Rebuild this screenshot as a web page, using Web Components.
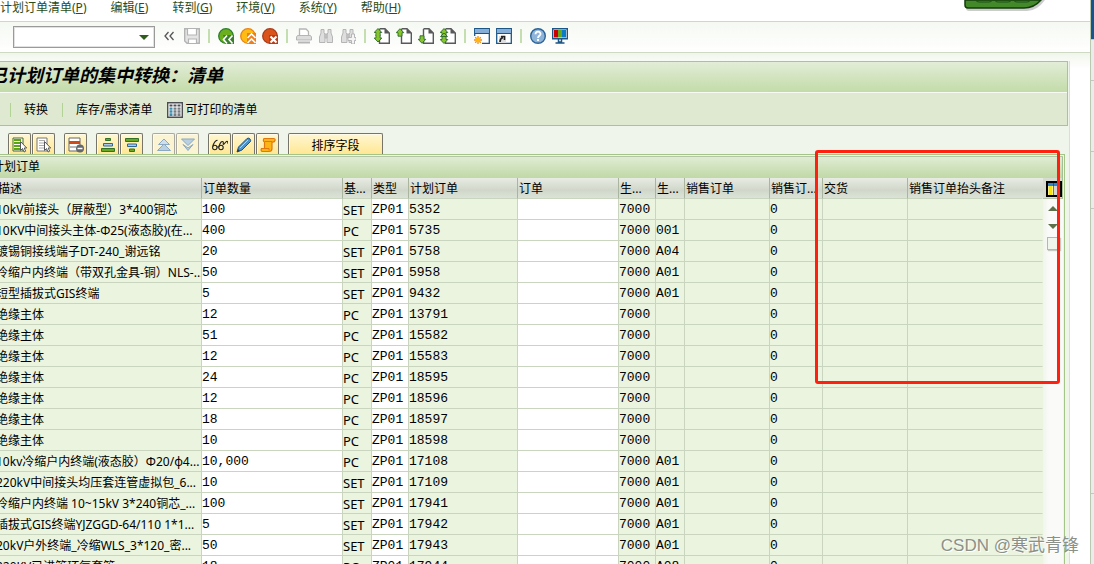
<!DOCTYPE html>
<html lang="zh-CN">
<head>
<meta charset="utf-8">
<title>已计划订单的集中转换：清单</title>
<style>
html,body{margin:0;height:100%;overflow:hidden;background:#fff}
body{font:12px/16px "Noto Sans","Noto Sans CJK SC",sans-serif;color:#000}
</style>
</head>
<body>
<sap-window>
  <menu-bar slot="menu"></menu-bar>
  <system-toolbar slot="system"></system-toolbar>
  <title-panel slot="title"><span>已计划订单的集中转换：清单</span></title-panel>
  <alv-toolbar slot="tools"></alv-toolbar>
  <alv-grid slot="grid" caption="计划订单"></alv-grid>
</sap-window>
<float-tab></float-tab>
<callout-box></callout-box>
<water-mark>CSDN @寒武青锋</water-mark>
<script>
const define=(name,html,setup)=>customElements.define(name,class extends HTMLElement{
  constructor(){super();this.attachShadow({mode:'open'});}
  connectedCallback(){
    const t=document.createElement('template');
    t.innerHTML=html;
    this.shadowRoot.append(t.content.cloneNode(true));
    if(setup)setup(this,this.shadowRoot);
  }
});

const page='<path d="M5.500 .7H11l4.300 4.300v10.300H5.500V1" fill="#fff" stroke="#58595b" stroke-width="1.400"/><path d="M10.500 .5V5.500H15.500z" fill="#58595b"/>';
const up=(y)=>`<path d="M4 ${y}l3.800 4H6v3.500H2v-3.500H.2z" fill="#86c52c" stroke="#2c6a2e" stroke-width=".9"/>`;
const down=(y)=>`<path d="M4 ${y}l3.800-4H6v-3.500H2v3.500H.2z" fill="#86c52c" stroke="#2c6a2e" stroke-width=".9"/>`;
const cursor='<path d="M8.500 4.500v9l2-2 1.500 3.500 1.700-.8-1.500-3.200h2.500z" fill="#fff" stroke="#55585c"/>';
const binoc='<path d="M3 1.500h3v3l1 2v8H1.500V9L3 5zM10 1.500h3V5l1.500 4v5.500H9v-8l1-2zM7 6h2v4H7z" fill="#dedede" stroke="#b5b5b5"/>';
const icons={
 more:'<path d="M7.500 4 4 8l3.500 4M12.500 4 9 8l3.500 4" fill="none" stroke="#555" stroke-width="1.300"/>',
 save:'<path d="M.7.700h14.600v14.600H3L.7 13z" fill="#e4e4e4" stroke="#b3b3b3" stroke-width="1.400"/><path d="M3.500 1v6h9V1M4.500 15v-4h8v4" fill="#fff" stroke="#b3b3b3" stroke-width="1.200"/>',
 back:'<circle cx="8" cy="8" r="7.300" fill="#6bae1e" stroke="#2d7d2e" stroke-width="1.300"/><path d="M5 7h11v9H8z" fill="#3a7f2c"/><path d="M9 7.500 5.500 11.500 9 15.500M14.500 7.500 11 11.500l3.500 4" fill="none" stroke="#fff" stroke-width="1.600"/>',
 exit:'<circle cx="8" cy="8" r="7.300" fill="#fdbb13" stroke="#e88314" stroke-width="1.300"/><path d="M7 5h9v11H7z" fill="#ef7d1a"/><path d="M7.500 10l4-4 4 4M7.500 15l4-4 4 4" fill="none" stroke="#fff" stroke-width="1.600"/>',
 cancel:'<circle cx="8" cy="8" r="7.300" fill="#d9531a" stroke="#a83c1c" stroke-width="1.300"/><path d="M7 7h9v9H7z" fill="#b63d18"/><path d="M8.500 8.500l6 6m0-6-6 6" stroke="#fff" stroke-width="2.200"/>',
 print:'<path d="M3.500 8V1H10l2.500 2.500V8" fill="#fff" stroke="#b5b5b5" stroke-width="1.300"/><path d="M1.500 7.500h13l1 1.500v3H.5V9z" fill="#dcdcdc" stroke="#b5b5b5"/><path d="M2 14.500h12" stroke="#b5b5b5" stroke-width="2"/>',
 find:binoc,
 findnext:binoc+'<path d="M11.500 6v3.500H8v3h3.500V16h3v-3.500H16v-3h-1.500V6z" fill="#f4f4f4" stroke="#b5b5b5"/>',
 first:page+down(14)+up(.5)+'<path d="M2.500 5.500h3v4h-3z" fill="#86c52c"/>',
 prev:page+up(.7),
 next:page+down(15.300),
 last:page+down(15.500)+up(.5)+'<path d="M.5 8.500h7L4 5z" fill="#86c52c" stroke="#2c6a2e" stroke-width=".9"/>',
 session:'<path d="M.7.700h14.600v14.600H.7z" fill="#fff" stroke="#1c5687" stroke-width="1.300"/><path d="M1 1h14v4.500H1z" fill="#87aed6"/><path d="M1 5.500h14" stroke="#1c5687"/><path d="M0 8h8v8H0z" fill="#fff"/><path d="M4 8v8M0 12h8M1.200 9.200l5.600 5.600M6.800 9.200l-5.600 5.600" stroke="#f08b1d" stroke-width="1.300"/><circle cx="4" cy="12" r="2.400" fill="#fdb813"/>',
 shortcut:'<path d="M.7.700h14.600v14.600H.7z" fill="#fff" stroke="#1c5687" stroke-width="1.300"/><path d="M1 1h14v4.500H1z" fill="#87aed6"/><path d="M1 5.500h14" stroke="#1c5687"/><path d="M3 8h7v7H3z" fill="#ddd"/><path d="M4 14c0-3 1-4 3-4.500M5 8.500h3.500V12" fill="none" stroke="#222" stroke-width="1.600"/>',
 help:'<circle cx="8" cy="8" r="7.300" fill="#8fb4da" stroke="#2c6296" stroke-width="1.400"/><path d="M5.500 6.200c0-3.600 5.300-3.200 5 0-.2 1.600-2.500 1.800-2.500 3.800M8 11v2" fill="none" stroke="#fff" stroke-width="1.900"/>',
 monitor:'<path d="M.7.700h14.600v10H.7z" fill="#fff" stroke="#1c5687" stroke-width="1.400"/><path d="M2 2h4v7.500H2z" fill="#c00"/><path d="M6 2h4v7.500H6z" fill="#68a51c"/><path d="M10 2h4v7.500h-4z" fill="#0a7cc4"/><path d="M6.500 11v3h3v-3M3.500 15h9" fill="none" stroke="#1c5687" stroke-width="1.500"/>',
 columns:'<path d="M.7.700h14.600v14.600H.7z" fill="#fff" stroke="#4b4f54" stroke-width="1.400"/><path d="M2.500 3.500h3M6.500 3.500h3M10.500 3.500h3" stroke="#4b4f54" stroke-width="2"/><path d="M4 5.500V14" stroke="#3d8cab" stroke-width="3"/><path d="M8 5.500V14M12 5.500V14" stroke="#787c80" stroke-width="3"/><path d="M2 8h12M2 11h12" stroke="#fff" stroke-width=".5"/>',
 selall:'<path d="M1 1h10v13H1z" fill="#fff" stroke="#456b2a"/><path d="M2 3h7M2 6h7M2 9h6M2 12h6" stroke="#5ea512" stroke-width="2"/>'+cursor,
 deselect:'<path d="M1 1h10v13H1z" fill="#fff" stroke="#777"/><path d="M3 3.500h6M3 6h5M3 8.500h5M3 11h5" stroke="#aaa"/>'+cursor,
 remove:'<path d="M1 1h11v13H1z" fill="#fff" stroke="#666"/><path d="M1 5.500h11" stroke="#d24a17" stroke-width="3"/><path d="M2 10h6" stroke="#777"/><circle cx="12" cy="11.500" r="4" fill="#63686e"/><path d="M9.500 11.500h5" stroke="#fff" stroke-width="1.500"/>',
 asc:'<path d="M5.500 1.500h5v2h-5zM1.500 11.500h13v3h-13z" fill="#69a81f" stroke="#33702a"/><path d="M3.500 6.500h9v2.500h-9z" fill="#a9cbed" stroke="#2e6695"/>',
 desc:'<path d="M1.500 1.500h13v3h-13zM5.500 12h5v2.500h-5z" fill="#69a81f" stroke="#33702a"/><path d="M3.500 7h9v2.500h-9z" fill="#a9cbed" stroke="#2e6695"/>',
 pgup:'<path d="M8 7l6.500 6.500h-13z" fill="#b9cfe2" stroke="#8ba9c2"/><path d="M8 2l5.500 5.500h-11z" fill="#cfdfec" stroke="#8ba9c2"/>',
 pgdn:'<path d="M8 8.500 1.500 2h13z" fill="#b9cfe2" stroke="#8ba9c2"/><path d="M3 7.500 8 13.500l5-6-5 3.500z" fill="#b9cfe2" stroke="#8ba9c2"/>',
 glasses:'<g fill="none" stroke="#222" stroke-width="1.100"><circle cx="2.800" cy="10.500" r="2.200"/><circle cx="9" cy="10.500" r="2.200"/><path d="M.8 9.500C1.500 5.500 4 3 5.500 3.500M6.900 9.500C8.500 4.500 10 4 11 4.800s-.5 2.700.5 2.700 1.500-2.500 3-3 1.500 1 1 2M5 10h2"/></g>',
 edit:'<path d="M1 15l1.500-5L11 1.500q2-1 3 .5t.5 2.500L6 13z" fill="#4f93c9" stroke="#1c5687"/><path d="M4 11l8-8" stroke="#b6d4ef"/><path d="M1 15l1-3 2 2z" fill="#1c3c5c"/>',
 script:'<path d="M4 1.500h9.500q2 0 1.500 2t-3 1.500v6.500q0 3-3 3H2q-1.500-1-.5-3H4.500V5Q2.500 4 4 1.500z" fill="#fdb515" stroke="#e0780f" stroke-width="1.200"/><path d="M5 4.500h7M5 11.500h4v2" fill="none" stroke="#e0780f"/>',
 layout:'<path d="M1 1h14v14H1z" fill="#fff" stroke="#000" stroke-width="2"/><path d="M4.500 5v9" stroke="#fbe400" stroke-width="4"/><path d="M9.500 5v9" stroke="#d5d5d5" stroke-width="3"/><path d="M12.500 5v9" stroke="#2271b5" stroke-width="1"/><path d="M2 3.500h12" stroke="#2f86cf" stroke-width="3"/><path d="M7.500 2v12" stroke="#335" stroke-width=".7"/>'
};

define('sap-icon','<style>:host{display:block;width:16px;height:16px;flex:none}svg{display:block;width:100%;height:100%}</style><svg viewBox="0 0 16 16" aria-hidden="true"></svg>',
 (el,root)=>{root.querySelector('svg').innerHTML=icons[el.getAttribute('name')];});

define('sap-window',`<style>
:host{display:flex;height:100vh;margin-left:-12px;background:#fff}
.main{flex:1;min-width:0;display:flex;flex-direction:column}
.client{flex:1;min-height:0;display:flex;flex-direction:column;padding:8px 20px 0 0;background:linear-gradient(#f0f6ec,#fff 16px)}
.work{flex:1;min-height:0;display:flex;flex-direction:column;background:#eff5eb;border-right:1px solid #d5e2cc;box-sizing:border-box}
.side{width:3px;flex:none;border-left:1px solid #b9c8ae;background:#ebebeb;display:flex;flex-direction:column}
.side i{border-bottom:1px solid #c5c5c5;height:71px;box-sizing:border-box;flex:none}
.side .blue{height:40px;background:#11568f}
.side .s{height:41px}
.side .m{height:57px}
.side .l{height:285px}
</style>
<div class="main"><slot name="menu"></slot><slot name="system"></slot>
<div class="client"><div class="work"><slot name="title"></slot><slot name="tools"></slot><slot name="grid"></slot></div></div></div>
<div class="side"><i class="blue"></i><i class="s"></i><i></i><i class="m"></i><i class="l"></i></div>`);

define('menu-bar',`<style>
:host{display:block;flex:none}
nav{display:flex;gap:24px;height:21px;padding-left:12px;border-bottom:1px solid #cdd9c3}
a{color:#2b4d18;text-decoration:none;line-height:16px;white-space:nowrap}
</style><nav></nav>`,(el,root)=>{
 root.querySelector('nav').innerHTML=[['计划订单清单','P'],['编辑','E'],['转到','G'],['环境','V'],['系统','Y'],['帮助','H']].map(([t,k])=>`<a href="#">${t}(<u>${k}</u>)</a>`).join('');
});

define('system-toolbar',`<style>
:host{display:flex;flex:none;align-items:flex-start;gap:6px;height:26px;padding:4px 0 0 25px;border-bottom:1px solid #cdd9c3;background:linear-gradient(#f5f9f2,#fff)}
.combo{display:flex;align-items:center;width:142px;height:22px;box-sizing:border-box;border:1px solid #9a9a9a;background:#fff;box-shadow:inset 0 0 0 1px #e2e2e2}
input{flex:1;min-width:0;border:0;padding:0 4px;background:none;outline:0;font:inherit}
button{border:0;padding:0;background:none;display:block}
.tool{margin-top:2px}
.drop{width:20px}
.drop::before{content:"";display:block;margin:0 auto;width:0;border:5px solid transparent;border-top-color:#2f5d1c;border-bottom:0}
.more{margin-right:1px}
.sep{width:2px;height:14px;margin:3px 2px 0;background:#c5deb0}
</style>
<div class="combo"><input aria-label="命令"><button class="drop" aria-label="展开"></button></div>`,(el,root)=>{
 const names=['more','save','','back','exit','cancel','','print','find','findnext','','first','prev','next','last','','session','shortcut','','help','monitor'];
 root.querySelector('.combo').insertAdjacentHTML('afterend',names.map(n=>n?`<button class="tool ${n}" aria-label="${n}"><sap-icon name="${n}"></sap-icon></button>`:'<span class="sep"></span>').join(''));
});

define('title-panel',`<style>
:host{display:block;flex:none;border:1px solid #aebfa0;border-left:0;margin-right:1px}
h1{margin:0;height:30px;padding-left:1px;font-size:18px;line-height:26px;font-style:italic;font-weight:700;white-space:nowrap;background:linear-gradient(#e2edd7,#c3dba9);border-bottom:1px solid #f6faf2}
.bar{display:flex;align-items:center;height:30px;padding:2px 0 0 22px;background:#dfe9d2}
button{display:flex;align-items:center;gap:2px;border:0;padding:0;background:none;font:inherit;color:#000;white-space:nowrap}
.sep{width:1px;height:14px;background:#b3d295}
.sep+button{margin-left:13px}
button+.sep{margin-left:14px}
button+button{margin-left:15px}
</style><h1><slot></slot></h1>
<div class="bar"><span class="sep"></span><button>转换</button><span class="sep"></span><button>库存/需求清单</button><button><sap-icon name="columns"></sap-icon>可打印的清单</button></div>`);

define('alv-toolbar',`<style>
:host{display:flex;flex:none;gap:9px;padding:7px 0 0 20px}
.group{display:flex;gap:1px}
button{width:23px;height:21px;box-sizing:border-box;border:1px solid #77756a;border-bottom:0;border-radius:2px 2px 0 0;padding:1px 0 0 3px;background:linear-gradient(#fff7d3,#ffe793);box-shadow:inset 1px 1px #fffbe8;font:inherit;color:#000}
button.off{border-color:#aaa99f;background:#fbf4d3}
button.text{width:95px;padding:3px 0 0;text-align:center}
</style>`,(el,root)=>{
 const groups=['selall deselect','remove','asc desc','pgup pgdn','glasses edit script'];
 root.innerHTML+=groups.map(g=>'<div class="group">'+g.split(' ').map(n=>`<button class="${n.startsWith('pg')?'off':''}" aria-label="${n}"><sap-icon name="${n}"></sap-icon></button>`).join('')+'</div>').join('')+'<button class="text">排序字段</button>';
});

const columns=[['描述',214,'d'],['订单数量',141,'w'],['基...',29,'u'],['类型',37,'w'],['计划订单',109,''],['订单',101,'w'],['生...',37,''],['生...',29,''],['销售订单',85,''],['销售订...',53,''],['交货',85,''],['销售订单抬头备注',0,'']];
const rows=[
['10kV前接头（屏蔽型）3*400铜芯','100','SET','5352',''],
['10KV中间接头主体-Φ25(液态胶)(在...','400','PC','5735','001'],
['镀锡铜接线端子DT-240_谢远铭','20','SET','5758','A04'],
['冷缩户内终端（带双孔金具-铜）NLS-...','50','SET','5958','A01'],
['短型插拔式GIS终端','5','SET','9432','A01'],
['绝缘主体','12','PC','13791',''],
['绝缘主体','51','PC','15582',''],
['绝缘主体','12','PC','15583',''],
['绝缘主体','24','PC','18595',''],
['绝缘主体','12','PC','18596',''],
['绝缘主体','18','PC','18597',''],
['绝缘主体','10','PC','18598',''],
['10kv冷缩户内终端(液态胶）Φ20/φ4...','10,000','PC','17108','A01'],
['220kV中间接头均压套连管虚拟包_6...','10','SET','17109','A01'],
['冷缩户内终端 10~15kV 3*240铜芯_...','100','SET','17941','A01'],
['插拔式GIS终端YJZGGD-64/110 1*1...','5','SET','17942','A01'],
['20kV户外终端_冷缩WLS_3*120_密...','50','SET','17943','A01'],
['220KV已进管环氧套管','18','PC','17944','A08']];

define('alv-grid',`<style>
:host{display:flex;flex:1;min-height:0;margin-right:4px;border:1px solid #a5c487;border-left:0;border-bottom:0;padding:1px 1px 0 0}
.inner{flex:1;min-width:0;display:flex;flex-direction:column;border-top:1px solid #b4c5a5}
.cap{flex:none;height:21px;padding-left:4px;line-height:19px;background:linear-gradient(#e0ecd4,#c0d8a6);border-right:1px solid #a8bd95}
.body{flex:1;min-height:0;display:flex;overflow:hidden}
.data{flex:1;min-width:0}
table{width:100%;table-layout:fixed;border-collapse:separate;border-spacing:0}
th,td{height:18px;padding:2px 0 0;border-bottom:1px solid #c9d5bf;border-right:1px solid #c9d5bf;line-height:18px;text-align:left;overflow:hidden;white-space:nowrap}
th{font-weight:400;padding-left:1px;background:linear-gradient(#e8ece4,#d0d7ca 60%,#dce2d7);border-right-color:#a9b59f}
th:last-child,td:last-child{border-right-color:transparent}
td{background:#eaf4df;font-family:"Liberation Mono","Noto Sans CJK SC",monospace;font-size:13px}
td.w{background:#fff}
td.d{font-family:inherit;font-size:12px;padding-left:8px}
td.u{font-family:inherit}
th:first-child{padding-left:10px}
.scroll{width:20px;flex:none;display:flex;flex-direction:column;align-items:center;background:linear-gradient(90deg,#f0f5eb,#fafbf9 30%,#fafbf9)}
.layout{border:0;padding:2px 0 0 3px;box-sizing:border-box;height:21px;width:100%;background:#d6dcd0;border-bottom:1px solid #b5c2a9;border-right:1px solid #a8bd95;flex:none}
.up,.down{border:0;background:none;padding:0;width:14px;height:18px;flex:none}
.up::before,.down::before{content:"";display:block;width:0;margin:auto;border:5px solid transparent}
.up::before{border-bottom-color:#5c7049;border-top:0}
.down::before{border-top-color:#5c7049;border-bottom:0}
.thumb{width:13px;height:13px;box-sizing:border-box;margin-top:2px;border:1px solid #b0bca6;background:#f1f6ec;box-shadow:1px 1px 1px #c5c9c1;flex:none}
</style>
<div class="inner"><div class="cap"></div><div class="body"><div class="data"><table><colgroup></colgroup><thead><tr></tr></thead><tbody></tbody></table></div>
<div class="scroll"><button class="layout" aria-label="布局"><sap-icon name="layout"></sap-icon></button><button class="up" aria-label="向上"></button><button class="down" aria-label="向下"></button><div class="thumb"></div></div></div></div>`,(el,root)=>{
 const q=s=>root.querySelector(s);
 q('.cap').textContent=el.getAttribute('caption');
 q('colgroup').innerHTML=columns.map(c=>`<col${c[1]?` style="width:${c[1]}px"`:''}>`).join('');
 q('thead tr').innerHTML=columns.map(c=>`<th>${c[0]}</th>`).join('');
 q('tbody').innerHTML=rows.map(([d,n,u,o,p])=>'<tr>'+[d,n,u,'ZP01',o,'','7000',p,'','0','',''].map((v,i)=>`<td class="${columns[i][2]}">${v}</td>`).join('')+'</tr>').join('');
});

define('float-tab',`<style>:host{position:absolute;top:0;right:45px;width:86px;height:14px}svg{display:block}</style>
<svg width="86" height="14" viewBox="0 0 86 14" aria-hidden="true"><path d="M3 0v8q0 3 3 3h58q10 0 18-11z" fill="#999" opacity=".5"/><path d="M2 0v5q0 3 3 3h56q10 0 17-8z" fill="#43892a" stroke="#153d0c" stroke-width="1.500"/><path d="M13 0q0 2 3 2h10q3 0 3-2M32 0q0 2 3 2h10q3 0 3-2M51 0q0 2 3 2h10q3 0 3-2" fill="none" stroke="#1d5213"/></svg>`);

define('callout-box','<style>:host{position:absolute;top:150px;right:34px;width:245px;height:234px;box-sizing:border-box;border:3px solid #ff2010;border-radius:3px;pointer-events:none}</style>');

define('water-mark','<style>:host{position:absolute;right:15px;bottom:6px;font:17px/24px "Liberation Sans","Noto Sans CJK SC",sans-serif;color:#8b9088;text-shadow:1px 1px #fff;white-space:nowrap}</style><slot></slot>');
</script>
</body>
</html>
